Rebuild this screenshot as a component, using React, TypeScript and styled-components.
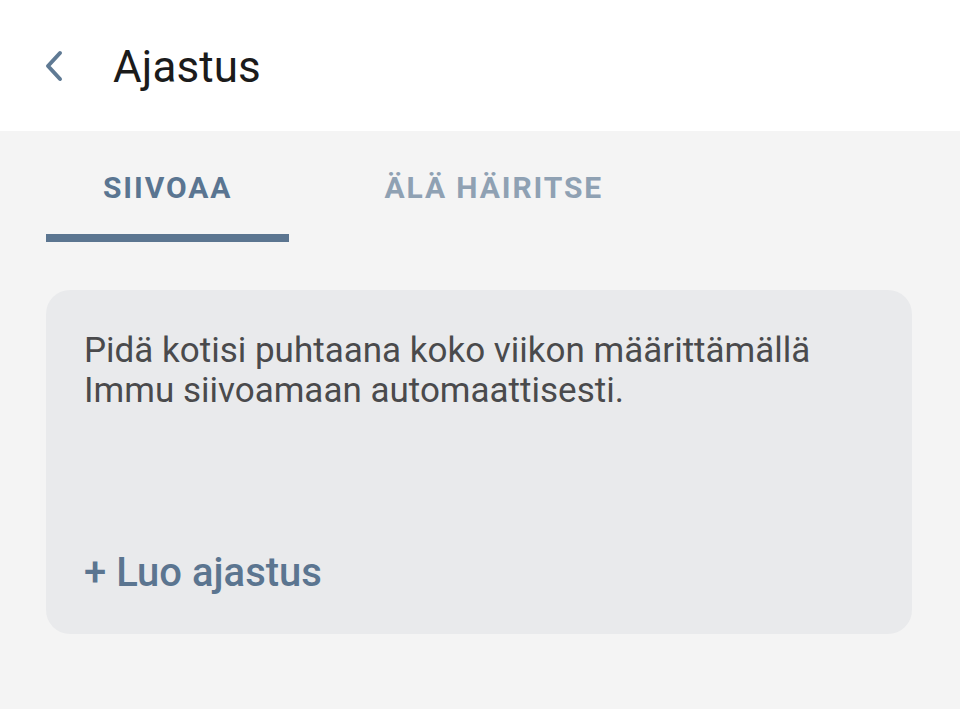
import React from "react";
import styled, { createGlobalStyle } from "styled-components";

const Global = createGlobalStyle`
  html, body { margin: 0; padding: 0; background: #f4f4f4; }
  body { font-family: Roboto, "Noto Sans", "Liberation Sans", sans-serif; }
  * { box-sizing: border-box; }
`;

const Page = styled.div`
  width: 960px;
  min-height: 709px;
  background: #f4f4f4;
  display: flex;
  flex-direction: column;
`;

const Header = styled.header`
  height: 131px;
  background: #ffffff;
  display: flex;
  align-items: center;
  padding-left: 42px;
  padding-top: 3px;
`;

const BackButton = styled.button`
  border: none;
  background: transparent;
  padding: 0;
  width: 24px;
  height: 32px;
  display: flex;
  align-items: center;
  justify-content: center;
  color: #5f7a94;
  margin-right: 47px;
  margin-top: -2px;
`;

const Title = styled.h1`
  margin: 0;
  font-family: Roboto, sans-serif;
  font-weight: 400;
  font-size: 44px;
  line-height: 52px;
  color: #1b1b1b;
  letter-spacing: 0.1px;
`;

const TabBar = styled.nav`
  display: flex;
  padding-left: 46px;
  height: 111px;
`;

const Tab = styled.div<{ $active?: boolean; $pad: number }>`
  display: flex;
  align-items: flex-start;
  justify-content: center;
  padding: 42px ${(p) => p.$pad}px 0;
  border-bottom: 8px solid ${(p) => (p.$active ? "#5b7590" : "transparent")};
  font-family: Roboto, sans-serif;
  font-weight: 700;
  font-size: 30px;
  line-height: 30px;
  letter-spacing: 1.9px;
  color: ${(p) => (p.$active ? "#5a7591" : "#8fa1b3")};
`;

const Card = styled.section`
  margin: 48px 48px 0 46px;
  height: 344px;
  background: #e9eaec;
  border-radius: 24px;
  padding: 41px 38px 41px 38px;
  display: flex;
  flex-direction: column;
`;

const Description = styled.p`
  margin: 0;
  font-family: Roboto, sans-serif;
  font-size: 35px;
  line-height: 40px;
  color: #4a4a4c;
`;

const CreateLink = styled.button`
  margin-top: auto;
  align-self: flex-start;
  border: none;
  background: transparent;
  padding: 0;
  font-family: Roboto, sans-serif;
  font-weight: 500;
  font-size: 40px;
  line-height: 40px;
  color: #5b7590;
`;

export default function App() {
  return (
    <Page>
      <Global />
      <Header>
        <BackButton aria-label="Takaisin">
          <svg width="20" height="32" viewBox="0 0 20 32" fill="none">
            <polyline
              points="16,3 4,16 16,29"
              stroke="currentColor"
              strokeWidth="4"
              strokeLinecap="round"
              strokeLinejoin="round"
            />
          </svg>
        </BackButton>
        <Title>Ajastus</Title>
      </Header>
      <TabBar>
        <Tab $active $pad={57}>SIIVOAA</Tab>
        <Tab $pad={95}>ÄLÄ HÄIRITSE</Tab>
      </TabBar>
      <Card>
        <Description>
          Pidä kotisi puhtaana koko viikon määrittämällä
          <br />
          Immu siivoamaan automaattisesti.
        </Description>
        <CreateLink>+ Luo ajastus</CreateLink>
      </Card>
    </Page>
  );
}
